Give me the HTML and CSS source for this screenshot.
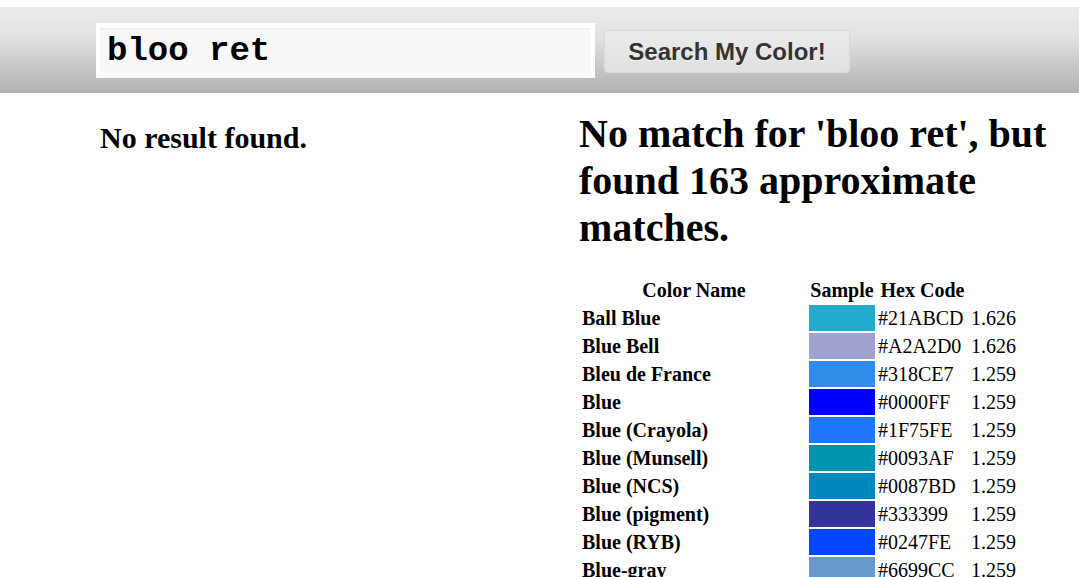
FILE: index.html
```html
<!DOCTYPE html>
<html>
<head>
<meta charset="utf-8">
<title>Search My Color</title>
<link rel="stylesheet" href="styles.css">
</head>
<body>
<header class="topbar">
  <form class="search">
    <input class="search-input" type="text" value="bloo ret">
    <button class="search-btn" type="button">Search My Color!</button>
  </form>
</header>
<main class="content">
  <section class="left-col">
    <h2 class="no-result">No result found.</h2>
  </section>
  <section class="right-col">
    <h1 class="approx-title">No match for 'bloo ret', but found 163 approximate matches.</h1>
    <table class="matches">
      <thead>
        <tr><th class="c-name">Color Name</th><th class="c-swatch">Sample</th><th class="c-hex">Hex Code</th><th class="c-score"></th></tr>
      </thead>
      <tbody>
        <tr><td class="c-name">Ball Blue</td><td class="c-swatch"><div class="swatch" style="background:#21ABCD"></div></td><td class="c-hex">#21ABCD</td><td class="c-score">1.626</td></tr>
        <tr><td class="c-name">Blue Bell</td><td class="c-swatch"><div class="swatch" style="background:#A2A2D0"></div></td><td class="c-hex">#A2A2D0</td><td class="c-score">1.626</td></tr>
        <tr><td class="c-name">Bleu de France</td><td class="c-swatch"><div class="swatch" style="background:#318CE7"></div></td><td class="c-hex">#318CE7</td><td class="c-score">1.259</td></tr>
        <tr><td class="c-name">Blue</td><td class="c-swatch"><div class="swatch" style="background:#0000FF"></div></td><td class="c-hex">#0000FF</td><td class="c-score">1.259</td></tr>
        <tr><td class="c-name">Blue (Crayola)</td><td class="c-swatch"><div class="swatch" style="background:#1F75FE"></div></td><td class="c-hex">#1F75FE</td><td class="c-score">1.259</td></tr>
        <tr><td class="c-name">Blue (Munsell)</td><td class="c-swatch"><div class="swatch" style="background:#0093AF"></div></td><td class="c-hex">#0093AF</td><td class="c-score">1.259</td></tr>
        <tr><td class="c-name">Blue (NCS)</td><td class="c-swatch"><div class="swatch" style="background:#0087BD"></div></td><td class="c-hex">#0087BD</td><td class="c-score">1.259</td></tr>
        <tr><td class="c-name">Blue (pigment)</td><td class="c-swatch"><div class="swatch" style="background:#333399"></div></td><td class="c-hex">#333399</td><td class="c-score">1.259</td></tr>
        <tr><td class="c-name">Blue (RYB)</td><td class="c-swatch"><div class="swatch" style="background:#0247FE"></div></td><td class="c-hex">#0247FE</td><td class="c-score">1.259</td></tr>
        <tr><td class="c-name">Blue-gray</td><td class="c-swatch"><div class="swatch" style="background:#6699CC"></div></td><td class="c-hex">#6699CC</td><td class="c-score">1.259</td></tr>
        <tr><td class="c-name">Blue-green</td><td class="c-swatch"><div class="swatch" style="background:#0D98BA"></div></td><td class="c-hex">#0D98BA</td><td class="c-score">1.259</td></tr>
      </tbody>
    </table>
  </section>
</main>
</body>
</html>
```

FILE: styles.css
```css
html, body {
  margin: 0;
  padding: 0;
  overflow: hidden;
  background: #fff;
}
body {
  padding-top: 7px;
  font-family: "Liberation Serif", "Times New Roman", serif;
  color: #000;
}

.topbar {
  height: 86px;
  background: linear-gradient(to bottom, #ececec 0%, #e2e2e2 35%, #b0b0b0 100%);
  box-sizing: border-box;
  padding: 16px 0 0 96px;
}
.search {
  display: flex;
  align-items: flex-start;
  gap: 9px;
  margin: 0;
}
.search-input {
  box-sizing: border-box;
  width: 499px;
  height: 55px;
  margin: 0;
  border: 5px solid #fff;
  border-left-width: 4px;
  background: #f8f8f8;
  box-shadow: inset 0 1px 2px rgba(0,0,0,0.06);
  padding: 0 0 0 7px;
  font-family: "Liberation Mono", "Courier New", monospace;
  font-weight: bold;
  font-size: 34px;
  color: #000;
  outline: none;
}
.search-btn {
  box-sizing: border-box;
  margin-top: 7px;
  width: 246px;
  height: 43px;
  border: 1px solid #dadada;
  border-radius: 4px;
  background: linear-gradient(to bottom, #ebebeb, #e0e0e0);
  font-family: "Liberation Sans", Arial, sans-serif;
  font-weight: bold;
  font-size: 24px;
  color: #333;
  padding: 0;
  text-shadow: 0 1px 0 rgba(255,255,255,0.5);
}

.content {
  display: flex;
  padding-left: 100px;
}
.left-col {
  width: 479px;
  flex: none;
  padding-top: 28px;
}
.no-result {
  margin: 0;
  font-size: 30px;
  line-height: 34px;
  font-weight: bold;
}
.right-col {
  width: 490px;
  flex: none;
  padding-top: 17px;
}
.approx-title {
  margin: 0 0 23.5px 0;
  font-size: 40px;
  line-height: 47px;
  font-weight: bold;
}

.matches {
  border-collapse: separate;
  border-spacing: 2px;
  font-size: 20px;
}
.matches th, .matches td {
  height: 26px;
  padding: 0 1px;
  line-height: 26px;
  vertical-align: middle;
  white-space: nowrap;
}
.matches th {
  font-weight: bold;
  text-align: center;
}
.matches td.c-name {
  font-weight: bold;
  text-align: left;
}
.c-name { width: 224px; }
.matches .c-swatch { width: 66px; padding: 0; }
.c-hex { width: 89px; }
.c-score { width: 45px; padding-left: 1px; }
.swatch {
  width: 66px;
  height: 26px;
}
```
